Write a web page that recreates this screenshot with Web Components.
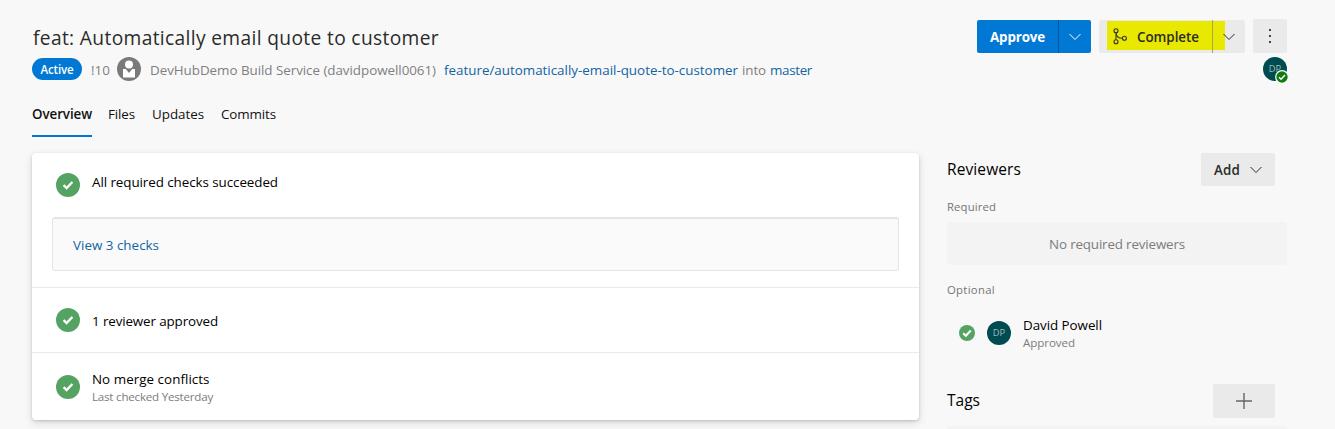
<!DOCTYPE html>
<html lang="en">
<head>
<meta charset="utf-8">
<title>Pull request 10</title>
<style>
body{margin:0;background:#f8f8f8;font-family:"Open Sans","Noto Sans",sans-serif;color:#000;height:429px;overflow:hidden}
</style>
</head>
<body>
<pr-page></pr-page>
<script>
const define = (name, html, setup) => customElements.define(name, class extends HTMLElement {
  connectedCallback() {
    if (this.shadowRoot) return;
    const t = document.createElement('template');
    t.innerHTML = html;
    this.attachShadow({mode: 'open'}).append(t.content.cloneNode(true));
    if (setup) setup(this, this.shadowRoot);
  }
});

// Single line label, tracked so that it fills the width given in "w".
define('fit-text', `<style>
  :host{display:block;flex:none;font-size:13.4px;line-height:20px;white-space:pre}
  span{display:inline-block}
</style><span><slot></slot></span>`, (el, root) => {
  const w = +el.getAttribute('w');
  const span = root.querySelector('span');
  const natural = span.getBoundingClientRect().width;
  span.style.letterSpacing = (w - natural) / el.textContent.length + 'px';
  el.style.width = w + 'px';
});

define('check-icon', `<style>
  :host{display:block;flex:none;width:24px;height:24px}
  :host([small]){width:16px;height:16px}
  svg{display:block;width:100%;height:100%}
</style><svg viewBox="0 0 24 24"><circle cx="12" cy="12" r="12" fill="#55a362"/><path class="tick" d="M7.6 12.2l3 2.9 5.8-6.1" fill="none" stroke="#fff" stroke-width="2.3"/></svg>`,
(el, root) => {
  if (el.hasAttribute('small')) {
    const p = root.querySelector('.tick');
    p.setAttribute('d', 'M6.3 12.3l4 3.8 7.4-7.8');
    p.setAttribute('stroke-width', '3.1');
  }
});

define('chevron-icon', `<style>:host{display:block;flex:none;width:12px;height:8px}svg{display:block}</style>
<svg width="12" height="8"><path d="M.5 1l5.5 5.5L11.5 1" fill="none" stroke="currentColor" stroke-width="1"/></svg>`);

define('user-avatar', `<style>
  :host{display:block;flex:none;position:relative;width:24px;height:24px}
  .disc{height:24px;border-radius:50%;background:#004b50;color:#9fbdbf;font-size:9.3px;line-height:24px;text-align:center}
  svg{display:none;position:absolute;left:12px;top:13px}
  :host([approved]) svg{display:block}
</style><div class="disc"><slot></slot></div>
<svg width="14" height="14"><circle cx="7" cy="7" r="6.3" fill="#107c10" stroke="#fff" stroke-width="1.2"/><path d="M4 7.2l2.1 2 3.9-4.1" fill="none" stroke="#fff" stroke-width="1.5"/></svg>`);

define('service-avatar', `<style>:host{display:block;flex:none;width:24px;height:24px}svg{display:block}</style>
<svg width="24" height="24"><circle cx="12" cy="12" r="12" fill="#7a7a7a"/><circle cx="12" cy="7.5" r="4" fill="#fff"/><path d="M6 12h2.8l3.2 4 3.2-4H18v8.5H6z" fill="#fff"/></svg>`);

define('split-button', `<style>
  :host{display:flex;height:33px;border-radius:2px;background:#eaeaea;color:#2b2b2b;font-weight:550}
  :host([primary]){background:#0078d4;color:#fff;font-weight:700}
  .main{display:flex;align-items:center;box-sizing:border-box;width:82px;padding-left:13px;border-right:1px solid #00559b}
  .drop{display:flex;align-items:center;justify-content:center;flex:1}
  :host([marked]){background:linear-gradient(#e8e800,#e8e800) 8px 1px/118px 29px no-repeat #eaeaea}
  :host([marked]) .main{width:114px;border-color:#aaa94a}
</style><div class="main"><slot></slot></div><div class="drop"><chevron-icon></chevron-icon></div>`);

define('merge-icon', `<style>:host{display:block;flex:none;width:14px;height:17px;margin:0 10px 0 1px}svg{display:block}</style>
<svg width="14" height="17" fill="none" stroke="#333" stroke-width="1.1"><circle cx="3" cy="2.8" r="2"/><circle cx="3" cy="13.7" r="2"/><circle cx="11.4" cy="10.3" r="2"/><path d="M3 4.8v6.9M3 4.8c.2 3.6 2.8 5.5 6.4 5.5"/></svg>`);

define('grey-button', `<style>
  :host{display:flex;align-items:center;justify-content:center;flex:none;box-sizing:border-box;height:33px;border-radius:2px;background:#eaeaea;color:#2b2b2b;font-weight:550}
</style><slot></slot>`);

define('pr-header', `<style>
  :host{display:flex;justify-content:space-between;height:83px;padding:0 48px 0 32px}
  .title{color:#2b2b2b;font-size:19.2px;line-height:28px;margin:24px 0 0 1px}
  .meta{display:flex;align-items:center;height:24px;margin-top:5px;color:#808080}
  .meta>fit-text{padding-top:2px}
  .pill{display:flex;justify-content:center;width:50px;height:22px;border-radius:11px;background:#0078d4;color:#fff;font-weight:600}
  .pill fit-text{font-size:11.6px;line-height:23px}
  .meta .link{color:#1264a3}
  .right{display:flex;flex-direction:column;align-items:flex-end}
  .actions{display:flex;align-items:flex-end;gap:8px;height:34px;margin-top:19px}
  .approve{width:114px}.complete{width:146px}
  .more{width:34px;height:34px}
  .who{margin-top:4px}
</style>
<div><fit-text class="title" w="406">feat: Automatically email quote to customer</fit-text>
<div class="meta"><div class="pill"><fit-text w="33">Active</fit-text></div>
<fit-text w="19" style="margin-left:9px">!10</fit-text><service-avatar style="margin:0 9px 0 7px"></service-avatar>
<fit-text w="286">DevHubDemo Build Service (davidpowell0061)</fit-text>
<fit-text w="294" class="link" style="margin-left:8px">feature/automatically-email-quote-to-customer</fit-text>
<fit-text w="24" style="margin:0 4px">into</fit-text><fit-text w="42" class="link">master</fit-text></div></div>
<div class="right"><div class="actions">
<split-button primary class="approve"><fit-text w="55">Approve</fit-text></split-button>
<split-button marked class="complete"><merge-icon></merge-icon><fit-text w="62">Complete</fit-text></split-button>
<grey-button class="more"><svg width="4" height="16" fill="#444"><rect x="1" y="1" width="2" height="2"/><rect x="1" y="7" width="2" height="2"/><rect x="1" y="13" width="2" height="2"/></svg></grey-button></div>
<user-avatar class="who" approved>DP</user-avatar></div>`);

define('pr-tabs', `<style>
  :host{display:flex;gap:16px;height:33px;padding:21px 32px 0}
  .on{font-weight:560;border-bottom:2px solid #0078d4;height:31px}
  fit-text{color:#111}
</style><fit-text class="on" w="60">Overview</fit-text><fit-text w="27">Files</fit-text><fit-text w="52" style="margin-left:1px">Updates</fit-text><fit-text w="55" style="margin-left:1px">Commits</fit-text>`);

define('check-row', `<style>
  :host{display:flex;box-sizing:border-box;padding-left:24px;gap:12px}
</style><check-icon></check-icon><div><slot></slot></div>`);

define('checks-card', `<style>
  :host{display:block;width:887px;height:267px;border-radius:4px;background:#fff;box-shadow:0 1px 3px rgba(0,0,0,.16),0 3px 8px rgba(0,0,0,.12)}
  .box{box-sizing:border-box;height:54px;margin:0 20px 16px;padding:16px 20px;border:1px solid #e5e5e5;border-top-width:2px;border-radius:3px;background:#fafafa;color:#1264a3}
  .one{height:64px;padding-top:20px}
  .two{height:65px;padding-top:20px;border-top:1px solid #eaeaea}
  .three{height:68px;padding-top:22px;border-top:1px solid #eaeaea}
  .sub{font-size:11.6px;line-height:16px;color:#7c7c7c}
</style>
<check-row class="one"><fit-text w="186" style="margin-top:-1px">All required checks succeeded</fit-text></check-row>
<div class="box"><fit-text w="86">View 3 checks</fit-text></div>
<check-row class="two"><fit-text w="126" style="margin-top:3px">1 reviewer approved</fit-text></check-row>
<check-row class="three"><fit-text w="117.5" style="margin-top:-6px">No merge conflicts</fit-text><fit-text w="121" class="sub">Last checked Yesterday</fit-text></check-row>`);

define('side-panel', `<style>
  :host{display:block;width:340px}
  .head{display:flex;justify-content:space-between;align-items:center;height:33px;padding-right:12px}
  .head>fit-text{font-size:15.5px;line-height:22px;padding-bottom:2px}
  .label{font-size:11.3px;line-height:16px;font-weight:520;color:#757575}
  .empty{display:flex;align-items:center;justify-content:center;height:43px;margin-top:7px;border-radius:4px;background:#f3f3f3;color:#7c7c7c}
  .person{display:flex;align-items:center;gap:12px;height:40px;margin-top:15px;padding-left:12px}
  .sub{font-size:11.6px;line-height:16px;color:#7c7c7c}
  .tags{height:34px;margin-top:31px}
  .field{height:3px;margin-top:8px;border-radius:4px 4px 0 0;background:#f3f3f3}
</style>
<div class="head"><fit-text w="74">Reviewers</fit-text><grey-button style="width:74px;gap:10px"><fit-text w="26">Add</fit-text><chevron-icon></chevron-icon></grey-button></div>
<fit-text class="label" w="49" style="margin-top:13px">Required</fit-text>
<div class="empty"><fit-text w="136">No required reviewers</fit-text></div>
<fit-text class="label" w="48" style="margin-top:17px">Optional</fit-text>
<div class="person"><check-icon small></check-icon><user-avatar>DP</user-avatar><div><fit-text w="79">David Powell</fit-text><fit-text class="sub" w="52">Approved</fit-text></div></div>
<div class="head tags"><fit-text w="33">Tags</fit-text><grey-button style="width:62px;height:34px"><svg width="16" height="16"><path d="M8 0v16M0 8h16" stroke="#666" stroke-width="1.4"/></svg></grey-button></div>
<div class="field"></div>`);

define('pr-page', `<style>
  :host{display:block}
  main{display:flex;height:276px;gap:28px;padding:16px 0 0 32px;box-sizing:border-box}
  :host{height:429px;overflow:hidden}
  main{height:293px}
</style><pr-header></pr-header><pr-tabs></pr-tabs><main><checks-card></checks-card><side-panel></side-panel></main>`);
</script>
</body>
</html>
